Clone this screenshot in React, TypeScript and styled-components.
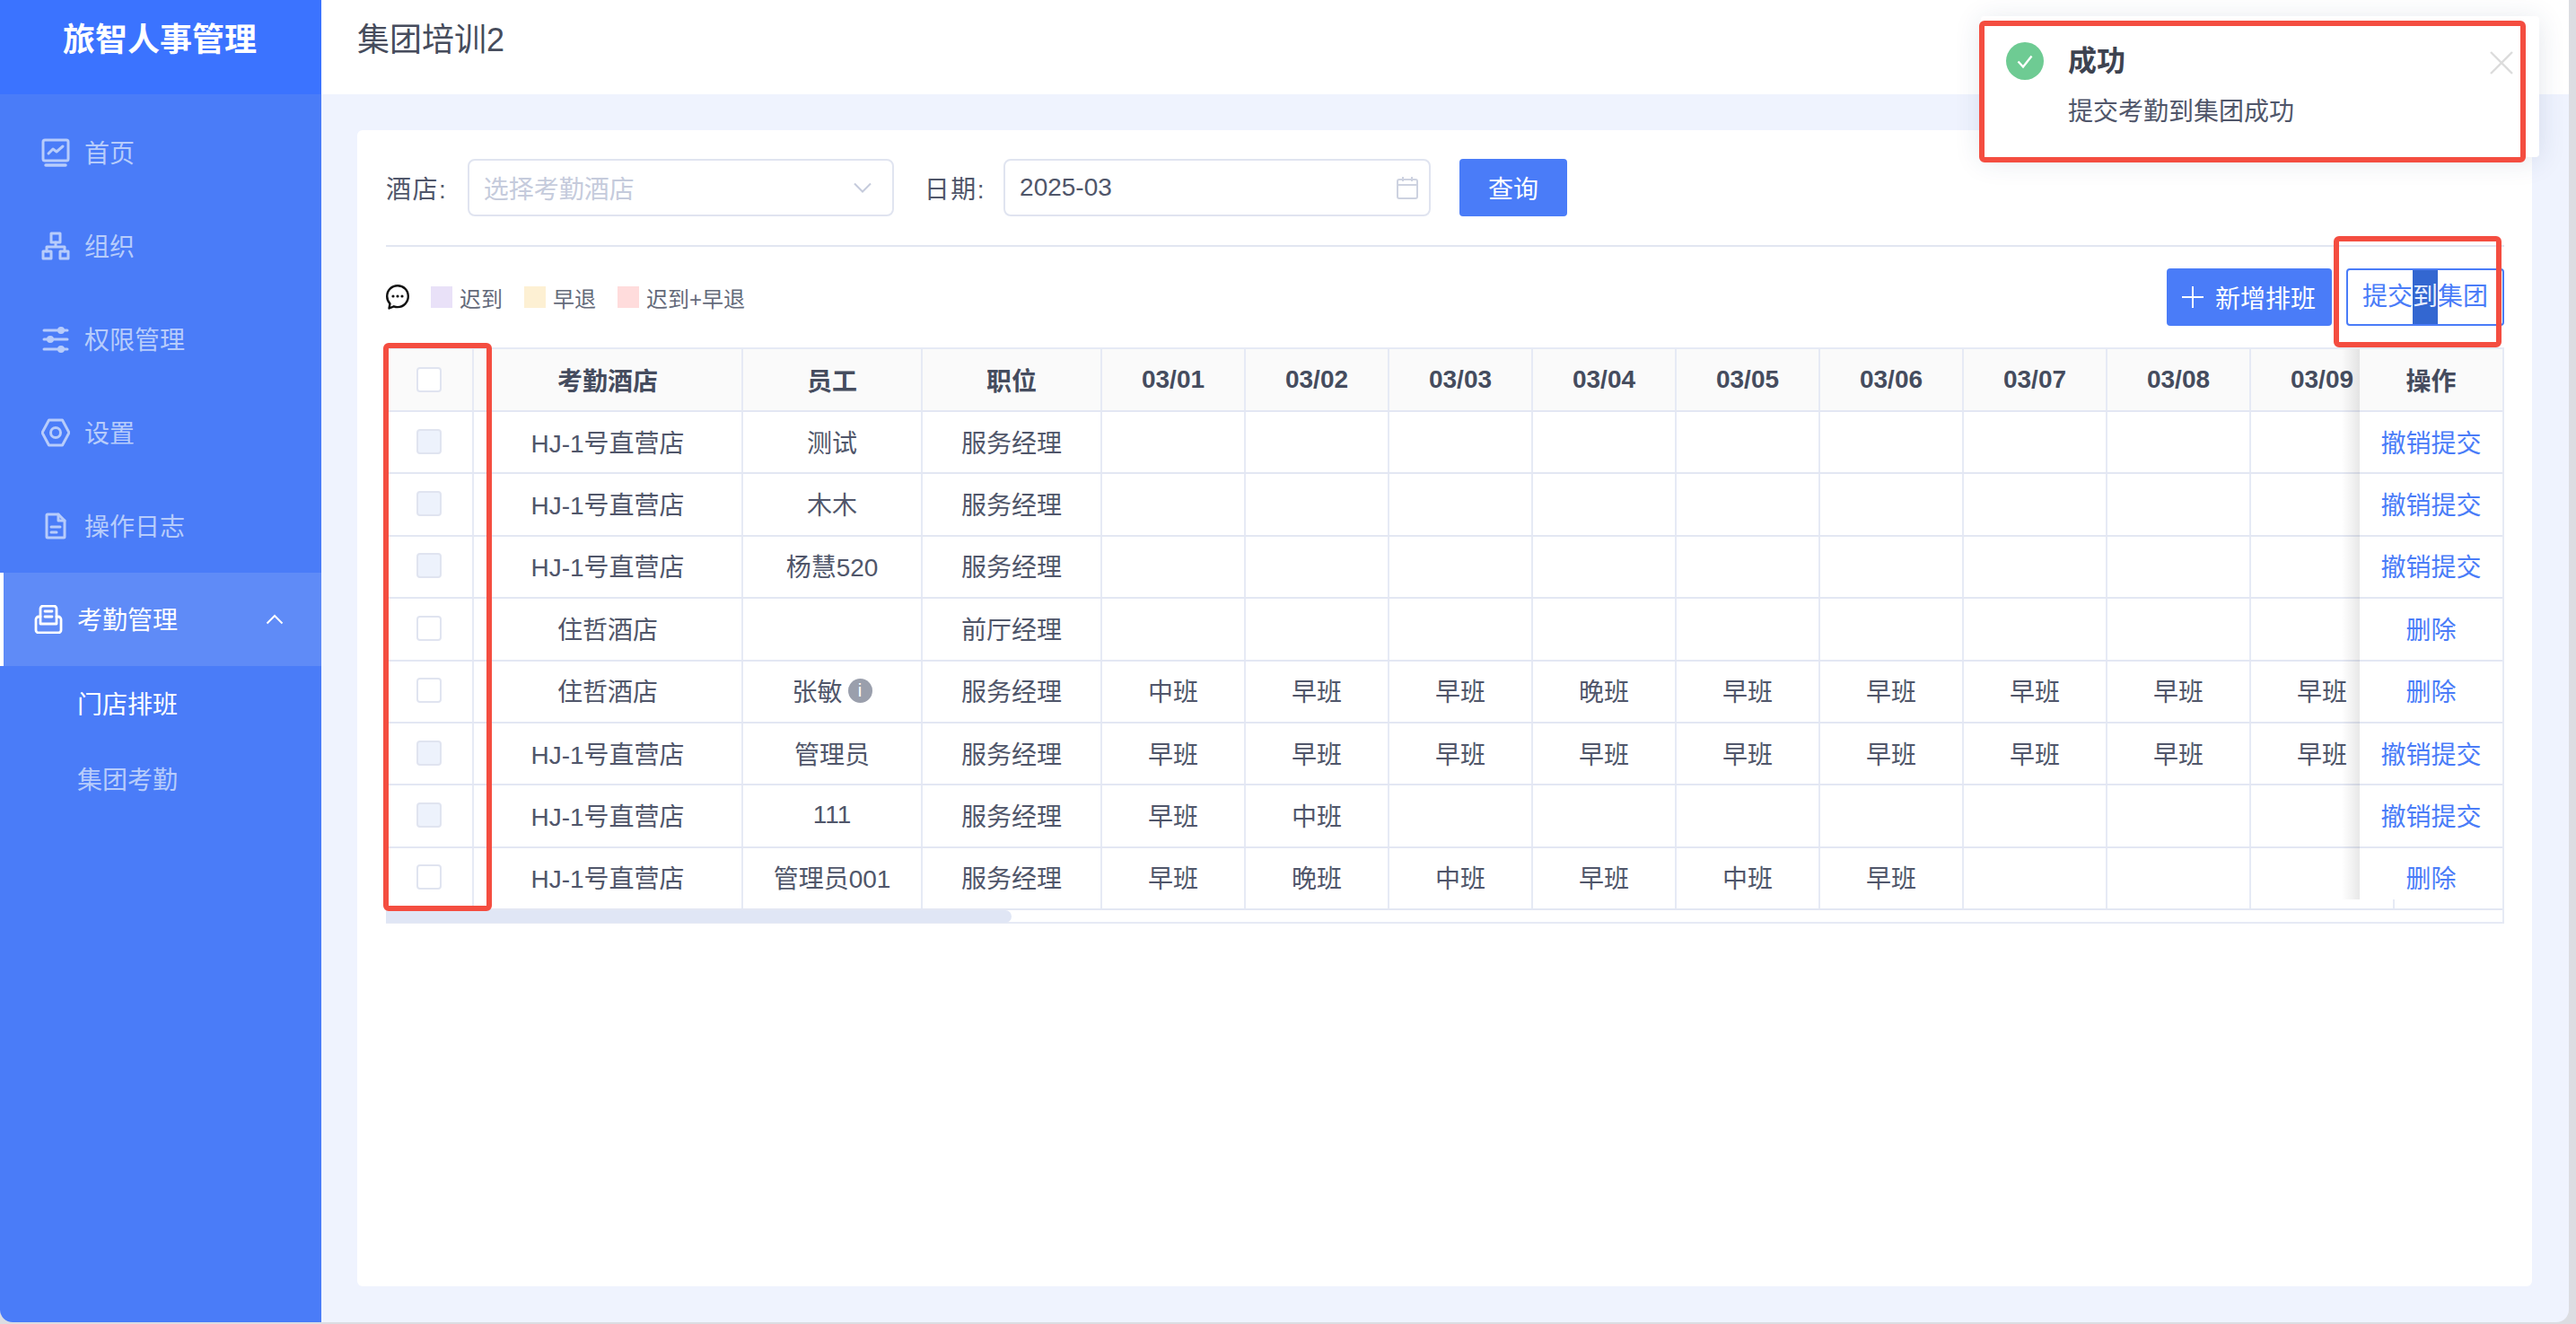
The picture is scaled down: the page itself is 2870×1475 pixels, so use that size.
import React from 'react';
import styled, { createGlobalStyle } from 'styled-components';

const GlobalStyle = createGlobalStyle`
  html, body {
    margin: 0;
    padding: 0;
    height: 100%;
    background: #dcdde2;
    overflow: hidden;
  }
  body, button {
    font-family: "Liberation Sans", "Noto Sans CJK SC", sans-serif;
  }
  * {
    box-sizing: border-box;
  }
`;

const Window = styled.div`
  position: relative;
  display: flex;
  width: 2862px;
  height: 1473px;
  border-radius: 0 0 14px 14px;
  overflow: hidden;
  background: #eff3fe;
`;

const Sidebar = styled.aside`
  flex: 0 0 358px;
  display: flex;
  flex-direction: column;
  background: #4a7cf8;
`;

const Logo = styled.div`
  height: 105px;
  padding-right: 2px;
  background: #3b73ff;
  color: #fff;
  font-size: 36px;
  font-weight: 700;
  line-height: 90px;
  text-align: center;
`;

const Nav = styled.nav`
  padding-top: 13px;
`;

const NavItem = styled.div<{ $active?: boolean }>`
  display: flex;
  align-items: center;
  height: 104px;
  padding-left: ${({ $active }) => ($active ? '34px' : '46px')};
  border-left: ${({ $active }) => ($active ? '4px solid #fff' : 'none')};
  gap: 16px;
  background: ${({ $active }) => ($active ? '#5f8bf7' : 'transparent')};
  color: ${({ $active }) => ($active ? '#fff' : '#b7ccfb')};
  font-size: 28px;

  svg {
    flex: none;
  }
`;

const NavLabel = styled.span`
  padding-bottom: 3px;
`;

const Chevron = styled.svg`
  margin-left: 82px;
`;

const SubItem = styled.div<{ $active?: boolean }>`
  height: 84px;
  padding-left: 86px;
  color: ${({ $active }) => ($active ? '#fff' : '#b7ccfb')};
  font-size: 28px;
  line-height: 87px;
`;

const Main = styled.main`
  flex: 1;
  display: flex;
  flex-direction: column;
  min-width: 0;
`;

const TopBar = styled.header`
  flex: 0 0 105px;
  padding-left: 40px;
  background: #fff;
  color: #464c5c;
  font-size: 36px;
  line-height: 90px;
`;

const Content = styled.div`
  flex: 1;
  padding: 40px 41px 40px 40px;
`;

const Card = styled.section`
  height: 100%;
  padding: 32px 31px 0 32px;
  border-radius: 6px;
  background: #fff;
`;

const FilterRow = styled.div`
  display: flex;
  align-items: center;
  height: 64px;
`;

const FilterLabel = styled.label<{ $gap: number }>`
  margin-right: ${({ $gap }) => $gap}px;
  color: #50566a;
  font-size: 28px;
  letter-spacing: 1.5px;
`;

const InputBox = styled.div<{ $width: number }>`
  display: flex;
  align-items: center;
  justify-content: space-between;
  width: ${({ $width }) => $width}px;
  height: 64px;
  padding: 0 12px 0 16px;
  border: 2px solid #e0e4f0;
  border-radius: 8px;
  font-size: 28px;
`;

const Placeholder = styled.span`
  color: #c5cbdc;
`;

const InputValue = styled.span`
  color: #50566a;
`;

const FilterGap = styled.div`
  width: 34px;
`;

const QueryButton = styled.button`
  width: 120px;
  height: 64px;
  margin-left: 32px;
  padding: 0;
  border: none;
  border-radius: 4px;
  background: #4a7cf8;
  color: #fff;
  font-size: 28px;
`;

const Divider = styled.hr`
  height: 2px;
  margin: 32px 0 24px;
  border: none;
  background: #e2e6f1;
`;

const Toolbar = styled.div`
  display: flex;
  align-items: center;
  justify-content: space-between;
  height: 64px;
  margin-bottom: 24px;
`;

const Legend = styled.div`
  display: flex;
  align-items: center;
  color: #646a7a;
  font-size: 24px;
`;

const LegendChat = styled.svg`
  margin-right: 24px;
`;

const LegendItem = styled.div<{ $color: string }>`
  display: flex;
  align-items: center;
  margin-right: 24px;

  &::before {
    content: '';
    width: 24px;
    height: 24px;
    margin-right: 8px;
    background: ${({ $color }) => $color};
  }
`;

const ToolbarButtons = styled.div`
  display: flex;
  gap: 16px;
`;

const PrimaryButton = styled.button`
  display: flex;
  align-items: center;
  gap: 13px;
  width: 184px;
  height: 64px;
  padding: 0 0 0 17px;
  border: none;
  border-radius: 4px;
  background: #4a7cf8;
  color: #fff;
  font-size: 28px;
`;

const OutlineButton = styled.button`
  width: 176px;
  height: 64px;
  padding: 0;
  border: 2px solid #4a7cf8;
  border-radius: 4px;
  background: #fff;
  color: #4a7cf8;
  font-size: 28px;
  line-height: 60px;
`;

const Selected = styled.span`
  display: inline-block;
  background: #3367d1;
  color: #e8efff;
`;

const TableFrame = styled.div`
  position: relative;
  width: 2360px;
  height: 642px;
  border-top: 2px solid #e6eaf5;
  border-right: 2px solid #e6eaf5;
  overflow: hidden;
`;

const Row = styled.div<{ $head?: boolean }>`
  display: grid;
  grid-template-columns: 98px 300px 200px 200px repeat(10, 160px);
  width: max-content;
  height: ${({ $head }) => ($head ? '70px' : '69.4px')};
  border-bottom: 2px solid #e3e7f3;
  background: ${({ $head }) => ($head ? '#fafafa' : '#fff')};
`;

const Cell = styled.div<{ $head?: boolean }>`
  display: flex;
  align-items: center;
  justify-content: center;
  gap: 6px;
  padding-bottom: ${({ $head }) => ($head ? '0' : '2px')};
  border-right: 2px solid #e6eaf5;
  color: ${({ $head }) => ($head ? '#454c5e' : '#50566a')};
  font-size: 28px;
  font-weight: ${({ $head }) => ($head ? 700 : 400)};
`;

const Checkbox = styled.span<{ $disabled?: boolean }>`
  width: 28px;
  height: 28px;
  border: 2px solid #e0e4f0;
  border-radius: 4px;
  background: ${({ $disabled }) => ($disabled ? '#edf2fc' : '#fff')};
`;

const InfoDot = styled.span`
  width: 27px;
  height: 27px;
  border-radius: 50%;
  background: #9a9fac;
  color: #fff;
  font-size: 20px;
  line-height: 27px;
  text-align: center;
`;

const FixedColumn = styled.div`
  position: absolute;
  top: 0;
  right: 0;
  width: 159px;
  height: 613px;

  &::before {
    content: '';
    position: absolute;
    top: 0;
    bottom: 0;
    left: -20px;
    width: 20px;
    background: linear-gradient(to right, rgba(0, 0, 0, 0), rgba(0, 0, 0, 0.09));
  }
`;

const FixedInner = styled.div`
  position: relative;
  height: 100%;
  background: #fff;
  overflow: hidden;
`;

const FixedRow = styled.div<{ $head?: boolean }>`
  display: flex;
  align-items: center;
  justify-content: center;
  height: ${({ $head }) => ($head ? '70px' : '69.4px')};
  padding-bottom: ${({ $head }) => ($head ? '0' : '2px')};
  border-bottom: 2px solid #e3e7f3;
  background: ${({ $head }) => ($head ? '#fafafa' : '#fff')};
  color: ${({ $head }) => ($head ? '#454c5e' : '#4a7cf8')};
  font-size: 28px;
  font-weight: ${({ $head }) => ($head ? 700 : 400)};
`;

const ScrollTrack = styled.div`
  height: 15px;
  background: #fff;
  box-shadow: inset 0 -2px 0 #e6eaf5;
`;

const ScrollThumb = styled.div`
  width: 697px;
  height: 14px;
  border-radius: 0 8px 8px 0;
  background: #e0e6f5;
`;

const Notice = styled.div`
  position: absolute;
  top: 18px;
  left: 2207px;
  display: flex;
  width: 622px;
  height: 157px;
  padding: 29px 0 0 28px;
  border-radius: 4px;
  background: #fff;
  box-shadow: 0 4px 30px rgba(40, 60, 110, 0.13);
`;

const NoticeIcon = styled.svg`
  flex: none;
  margin-right: 27px;
`;

const NoticeBody = styled.div`
  display: flex;
  flex-direction: column;
  padding-top: 1px;
`;

const NoticeTitle = styled.div`
  color: #3e4350;
  font-size: 32px;
  font-weight: 700;
  line-height: 40px;
`;

const NoticeText = styled.div`
  margin-top: 17px;
  color: #50566a;
  font-size: 28px;
  line-height: 40px;
`;

const NoticeClose = styled.svg`
  position: absolute;
  top: 39px;
  right: 29px;
`;

const RedBox = styled.div<{ $left: number; $top: number; $width: number; $height: number }>`
  position: absolute;
  left: ${({ $left }) => $left}px;
  top: ${({ $top }) => $top}px;
  width: ${({ $width }) => $width}px;
  height: ${({ $height }) => $height}px;
  border: 6px solid #f44d40;
  border-radius: 6px;
  pointer-events: none;
`;

const navItems = [
  {
    label: '首页',
    icon: (
      <>
        <rect x="2" y="2" width="28" height="23" rx="2" />
        <path d="M8 17l5-5 4 3 7-6" />
        <path d="M5 30h22" strokeWidth="3.5" />
      </>
    ),
  },
  {
    label: '组织',
    icon: (
      <>
        <rect x="11" y="2" width="10" height="10" />
        <path d="M16 12v5M6 22v-5h20v5" />
        <rect x="2" y="22" width="9" height="8" />
        <rect x="21" y="22" width="9" height="8" />
      </>
    ),
  },
  {
    label: '权限管理',
    icon: (
      <>
        <path d="M3 6h26M3 16h26M3 27h26" />
        <circle cx="22" cy="6" r="2.5" fill="currentColor" />
        <circle cx="10" cy="16" r="2.5" fill="currentColor" />
        <circle cx="22" cy="27" r="2.5" fill="currentColor" />
      </>
    ),
  },
  {
    label: '设置',
    icon: (
      <>
        <path d="M1 16L8.5 2h15L31 16l-7.5 14h-15z" />
        <circle cx="16" cy="16" r="5.5" />
      </>
    ),
  },
  {
    label: '操作日志',
    icon: (
      <>
        <path d="M7 3h12l7 7v18a1 1 0 0 1-1 1H7a1 1 0 0 1-1-1V4a1 1 0 0 1 1-1z" />
        <path d="M19 3v7h7M11 17h10M11 23h6" />
      </>
    ),
  },
];

// the last column only carries the row lines under the fixed 操作 column
const dates = ['03/01', '03/02', '03/03', '03/04', '03/05', '03/06', '03/07', '03/08', '03/09', ''];

const hj = 'HJ-1号直营店';
const zz = '住哲酒店';
const submitted = '撤销提交';
const remove = '删除';

const rows = [
  { hotel: hj, name: '测试', role: '服务经理', shifts: [], locked: true, action: submitted },
  { hotel: hj, name: '木木', role: '服务经理', shifts: [], locked: true, action: submitted },
  { hotel: hj, name: '杨慧520', role: '服务经理', shifts: [], locked: true, action: submitted },
  { hotel: zz, name: '', role: '前厅经理', shifts: [], locked: false, action: remove },
  {
    hotel: zz,
    name: '张敏',
    info: true,
    role: '服务经理',
    shifts: ['中班', '早班', '早班', '晚班', '早班', '早班', '早班', '早班', '早班'],
    locked: false,
    action: remove,
  },
  {
    hotel: hj,
    name: '管理员',
    role: '服务经理',
    shifts: ['早班', '早班', '早班', '早班', '早班', '早班', '早班', '早班', '早班'],
    locked: true,
    action: submitted,
  },
  { hotel: hj, name: '111', role: '服务经理', shifts: ['早班', '中班'], locked: true, action: submitted },
  {
    hotel: hj,
    name: '管理员001',
    role: '服务经理',
    shifts: ['早班', '晚班', '中班', '早班', '中班', '早班'],
    locked: false,
    action: remove,
  },
];

const App: React.FC = () => (
  <Window>
    <GlobalStyle />
    <Sidebar>
      <Logo>旅智人事管理</Logo>
      <Nav>
        {navItems.map((item) => (
          <NavItem key={item.label}>
            <svg width="32" height="32" viewBox="0 0 32 32" fill="none" stroke="currentColor" strokeWidth="3" strokeLinejoin="round" strokeLinecap="round">
              {item.icon}
            </svg>
            <NavLabel>{item.label}</NavLabel>
          </NavItem>
        ))}
        <NavItem $active>
          <svg width="32" height="32" viewBox="0 0 32 32" fill="none" stroke="currentColor" strokeWidth="2.8" strokeLinejoin="round" strokeLinecap="round">
            <path d="M7 21V4a3 3 0 0 1 3-3h12a3 3 0 0 1 3 3v17z" />
            <path d="M7 13H5a3 3 0 0 0-3 3v12a3 3 0 0 0 3 3h22a3 3 0 0 0 3-3V16a3 3 0 0 0-3-3h-2" />
            <path d="M12 7h8M12 13h8" />
          </svg>
          <NavLabel>考勤管理</NavLabel>
          <Chevron width="20" height="12" viewBox="0 0 20 12" fill="none" stroke="currentColor" strokeWidth="2">
            <path d="M1.5 10.5L10 2l8.5 8.5" />
          </Chevron>
        </NavItem>
        <SubItem $active>门店排班</SubItem>
        <SubItem>集团考勤</SubItem>
      </Nav>
    </Sidebar>
    <Main>
      <TopBar>集团培训2</TopBar>
      <Content>
        <Card>
          <FilterRow>
            <FilterLabel $gap={22.5}>酒店:</FilterLabel>
            <InputBox $width={475}>
              <Placeholder>选择考勤酒店</Placeholder>
              <svg width="20" height="12" viewBox="0 0 20 12" fill="none" stroke="#c5cbdc" strokeWidth="2" style={{ marginRight: 11 }}>
                <path d="M1 1.5L10 10.5l9-9" />
              </svg>
            </InputBox>
            <FilterGap />
            <FilterLabel $gap={20}>日期:</FilterLabel>
            <InputBox $width={476}>
              <InputValue>2025-03</InputValue>
              <svg width="24" height="26" viewBox="0 0 24 26" fill="none" stroke="#cdd2e0" strokeWidth="2">
                <rect x="1" y="4" width="22" height="21" rx="2" />
                <path d="M1 10h22M7 1v5M17 1v5" />
              </svg>
            </InputBox>
            <QueryButton>查询</QueryButton>
          </FilterRow>
          <Divider />
          <Toolbar>
            <Legend>
              <LegendChat width="26" height="28" viewBox="0 0 26 28">
                <path d="M13 1.2C6.4 1.2 1.2 6.4 1.2 13c0 3.2 1.200 6.100 3.300 8.300l-1 5.200 5.300-2.200c1.300.5 2.700.8 4.200.8 6.600 0 11.800-5.300 11.800-12.100S19.600 1.200 13 1.200z" fill="none" stroke="#111" strokeWidth="2.4" strokeLinejoin="round" />
                <circle cx="8" cy="13" r="1.6" fill="#111" />
                <circle cx="13" cy="13" r="1.6" fill="#111" />
                <circle cx="18" cy="13" r="1.6" fill="#111" />
              </LegendChat>
              <LegendItem $color="#e9e1f8">迟到</LegendItem>
              <LegendItem $color="#fdf0d3">早退</LegendItem>
              <LegendItem $color="#ffdcdc">迟到+早退</LegendItem>
            </Legend>
            <ToolbarButtons>
              <PrimaryButton>
                <svg width="24" height="24" viewBox="0 0 24 24" stroke="#fff" strokeWidth="2">
                  <path d="M12 0v24M0 12h24" />
                </svg>
                新增排班
              </PrimaryButton>
              <OutlineButton>
                提交<Selected>到</Selected>集团
              </OutlineButton>
            </ToolbarButtons>
          </Toolbar>
          <TableFrame>
            <Row $head>
              <Cell $head>
                <Checkbox />
              </Cell>
              <Cell $head>考勤酒店</Cell>
              <Cell $head>员工</Cell>
              <Cell $head>职位</Cell>
              {dates.map((d, j) => (
                <Cell $head key={j}>
                  {d}
                </Cell>
              ))}
            </Row>
            {rows.map((row, i) => (
              <Row key={i}>
                <Cell>
                  <Checkbox $disabled={row.locked} />
                </Cell>
                <Cell>{row.hotel}</Cell>
                <Cell>
                  {row.name}
                  {row.info && <InfoDot>i</InfoDot>}
                </Cell>
                <Cell>{row.role}</Cell>
                {dates.map((_, j) => (
                  <Cell key={j}>{row.shifts[j]}</Cell>
                ))}
              </Row>
            ))}
            <ScrollTrack>
              <ScrollThumb />
            </ScrollTrack>
            <FixedColumn>
              <FixedInner>
                <FixedRow $head>操作</FixedRow>
                {rows.map((row, i) => (
                  <FixedRow key={i}>{row.action}</FixedRow>
                ))}
              </FixedInner>
            </FixedColumn>
          </TableFrame>
        </Card>
      </Content>
    </Main>
    <Notice>
      <NoticeIcon width="42" height="42" viewBox="0 0 42 42">
        <circle cx="21" cy="21" r="21" fill="#6ecb93" />
        <path d="M13.5 21.5l5.5 6 9.5-12" fill="none" stroke="#fff" strokeWidth="2.4" />
      </NoticeIcon>
      <NoticeBody>
        <NoticeTitle>成功</NoticeTitle>
        <NoticeText>提交考勤到集团成功</NoticeText>
      </NoticeBody>
      <NoticeClose width="26" height="26" viewBox="0 0 26 26" stroke="#dcdcdc" strokeWidth="2.4">
        <path d="M1 1l24 24M25 1L1 25" />
      </NoticeClose>
    </Notice>
    <RedBox $left={427} $top={382} $width={121} $height={633} />
    <RedBox $left={2205} $top={23} $width={609} $height={158} />
    <RedBox $left={2600} $top={263} $width={187} $height={124} />
  </Window>
);

export default App;
